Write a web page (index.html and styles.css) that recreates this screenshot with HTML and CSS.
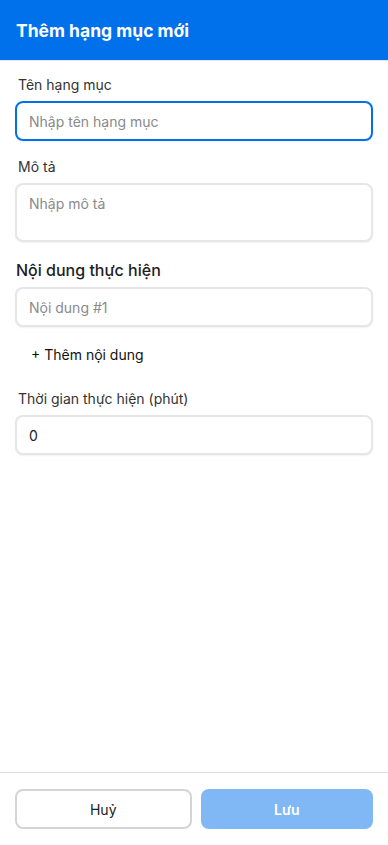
FILE: index.html
```html
<!DOCTYPE html>
<html lang="vi">
<head>
<meta charset="UTF-8">
<meta name="viewport" content="width=device-width, initial-scale=1.0">
<title>Thêm hạng mục mới</title>
<link rel="stylesheet" href="styles.css">
</head>
<body>
<div class="page">
<div class="header">
<h1 class="title">Thêm hạng mục mới</h1>
</div>

<div class="form">
<div class="field">
<label class="label">Tên hạng mục</label>
<input class="input focused" type="text" placeholder="Nhập tên hạng mục">
</div>

<div class="field">
<label class="label">Mô tả</label>
<textarea class="input textarea" placeholder="Nhập mô tả"></textarea>
</div>

<div class="section">
<h2 class="section-title">Nội dung thực hiện</h2>
<input class="input" type="text" placeholder="Nội dung #1">
<button class="add-btn">+ Thêm nội dung</button>
</div>

<div class="field">
<label class="label">Thời gian thực hiện (phút)</label>
<input class="input" type="text" value="0">
</div>
</div>

<div class="footer">
<button class="btn btn-cancel">Huỷ</button>
<button class="btn btn-save">Lưu</button>
</div>
</div>
</body>
</html>
```

FILE: styles.css
```css
body {
    font-family: Inter, "Noto Sans", sans-serif;
    margin: 0;
    background-color: #fff;
    color: #222;
}

.page {
    display: flex;
    flex-direction: column;
    min-height: 845px;
}

.header {
    background-color: #0070eb;
    height: 61px;
    display: flex;
    align-items: center;
    padding: 0 16px;
    box-sizing: border-box;
    border-bottom: 1px solid #e4e8ee;
}

.title {
    color: #fff;
    font-size: 17.5px;
    font-weight: 700;
    margin: 0;
}

.form {
    flex: 1;
    padding: 15px 15px 0;
}

.field {
    margin-bottom: 17px;
}

.label {
    display: block;
    font-size: 14px;
    color: #333;
    padding-left: 3px;
    margin-bottom: 8px;
    line-height: 17px;
}

.input {
    display: block;
    width: 100%;
    box-sizing: border-box;
    height: 40px;
    border: 2px solid #e6e6e6;
    border-radius: 8px;
    padding: 0 12px;
    font-family: inherit;
    font-size: 14px;
    color: #222;
    background: #fff;
    outline: none;
    box-shadow: 0 1px 2px rgba(0, 0, 0, 0.06);
}

.input::placeholder {
    color: #8a8a8a;
}

.input.focused {
    border-color: #0070eb;
}

.textarea {
    height: 59px;
    padding-top: 10px;
    resize: none;
}

.section {
    margin-top: 18px;
}

.section-title {
    font-size: 16px;
    font-weight: 500;
    margin: 0 0 7px 1px;
    line-height: 20px;
    color: #1e1e1e;
}

.add-btn {
    display: block;
    background: none;
    border: none;
    font-family: inherit;
    font-size: 14px;
    color: #111;
    padding: 8px 16px;
    margin: 11px 0 19px;
    cursor: pointer;
}

.footer {
    border-top: 1px solid #dedede;
    padding: 16px 15px;
    display: flex;
    gap: 9px;
}

.btn {
    flex: 1;
    height: 40px;
    border-radius: 8px;
    font-family: inherit;
    font-size: 14px;
    cursor: pointer;
}

.btn-cancel {
    background: #fff;
    border: 2px solid #d4d4d8;
    color: #222;
}

.btn-save {
    background: #80b7f5;
    border: none;
    color: #fff;
    font-weight: 600;
}
```
